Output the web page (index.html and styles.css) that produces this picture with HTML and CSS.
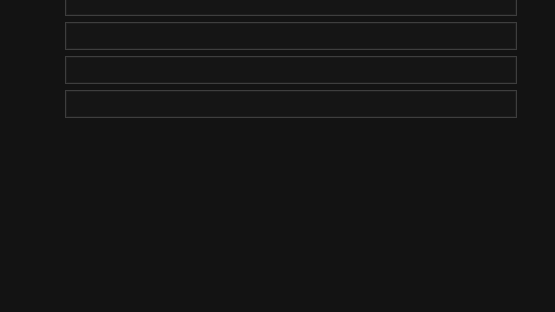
FILE: index.html
```html
<!DOCTYPE html>
<html>
<head>
<meta charset="utf-8">
<link rel="stylesheet" href="styles.css">
</head>
<body>
<div class="page">
  <div class="list">
    <div class="field"></div>
    <div class="field"></div>
    <div class="field"></div>
    <div class="field"></div>
  </div>
</div>
</body>
</html>
```
FILE: styles.css
```css
html, body {
  margin: 0;
  padding: 0;
  background: #131313;
  height: 100%;
  overflow: hidden;
  font-family: "Liberation Sans", sans-serif;
}
.page {
  padding-left: 65px;
  width: 452px;
}
.list {
  margin-top: -12px;
  display: flex;
  flex-direction: column;
  gap: 6px;
}
.field {
  height: 26px;
  border: 1px solid #3e3e3e;
  background: #151515;
  box-shadow: inset 0 0 0 1px #1d1d1d;
}
```
